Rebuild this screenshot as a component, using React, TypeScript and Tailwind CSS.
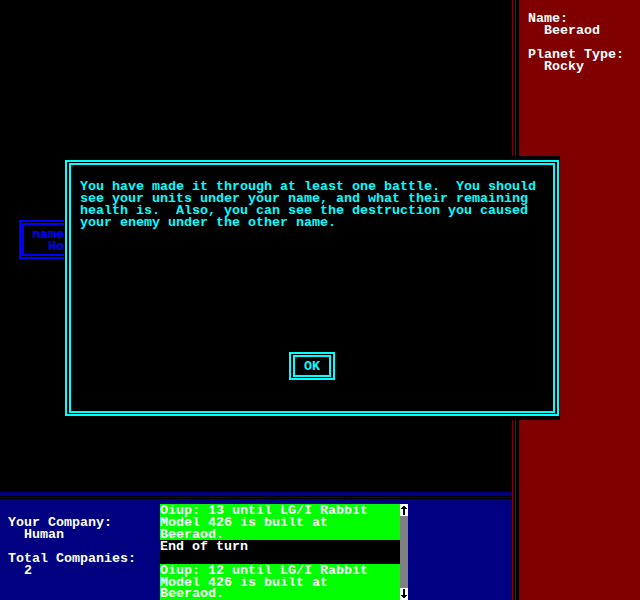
import React from "react";

function L({ children }: { children?: React.ReactNode }) {
  return <div className="h-[12px] leading-[14px]">{children}</div>;
}

export default function App() {
  return (
    <div className="relative flex w-[640px] h-[600px] bg-black overflow-hidden font-['Liberation_Mono','DejaVu_Sans_Mono',monospace] font-bold text-[13.333px] leading-[12px] whitespace-pre">
      <div className="flex flex-col w-[512px]">
        <div className="h-[492px] bg-black pt-[220px] pl-[19px]">
          <div className="w-[130px] border-2 border-[#0000ff] px-[1px] py-[1px]">
            <div className="border-2 border-[#0000ff] pt-[3px] pb-[2px] pl-[8px] text-[#0000ff]">
              <L>name:</L>
              <L>  Home</L>
            </div>
          </div>
        </div>
        <div className="h-[108px] bg-[#000080] flex flex-col">
          <div className="h-[4px]" />
          <div className="h-[1px] bg-black" />
          <div className="h-[1px]" />
          <div className="h-[1px] bg-black" />
          <div className="flex mt-[5px]">
            <div className="w-[160px] pt-[12px] pl-[8px] text-white">
              <L>Your Company:</L>
              <L>  Human</L>
              <L> </L>
              <L>Total Companies:</L>
              <L>  2</L>
            </div>
            <div className="w-[240px] text-white">
              <div className="bg-[#00ff00]">
                <L>Oiup: 13 until LG/I Rabbit</L>
                <L>Model 426 is built at</L>
                <L>Beeraod.</L>
              </div>
              <div className="bg-black">
                <L>End of turn</L>
                <L> </L>
              </div>
              <div className="bg-[#00ff00]">
                <L>Oiup: 12 until LG/I Rabbit</L>
                <L>Model 426 is built at</L>
                <div className="h-[12px] leading-[12px]">Beeraod.</div>
              </div>
            </div>
            <div className="w-[8px] flex flex-col">
              <div className="h-[12px] bg-white flex items-center justify-center">
                <svg width="8" height="12" viewBox="0 0 8 12">
                  <path d="M3 2h2v9H3zM2 3h4v1H2zM1 4h6v1H1z" fill="#000" />
                </svg>
              </div>
              <div className="h-[72px] bg-[#808080]" />
              <div className="h-[12px] bg-white flex items-center justify-center">
                <svg width="8" height="12" viewBox="0 0 8 12">
                  <path d="M3 1h2v9H3zM2 8h4v1H2zM1 7h6v1H1z" fill="#000" />
                </svg>
              </div>
            </div>
          </div>
        </div>
      </div>
      <div className="flex w-[128px] h-[600px] bg-[#800000]">
        <div className="w-[1px]" />
        <div className="w-[2px] bg-black" />
        <div className="w-[1px]" />
        <div className="w-[3px] bg-black" />
        <div className="flex-1 pl-[9px] pt-[12px] text-white">
          <L>Name:</L>
          <L>  Beeraod</L>
          <L> </L>
          <L>Planet Type:</L>
          <L>  Rocky</L>
        </div>
      </div>
      <div className="absolute left-[64px] top-[156px] w-[496px] h-[264px] bg-black px-[1px] pt-[4px] pb-[4px]">
        <div className="h-full border-2 border-[#00ffff] px-[2px] py-[1px]">
          <div className="h-full border-2 border-[#00ffff] pt-[15px] pl-[9px] text-[#00ffff] flex flex-col">
            <L>{"You have made it through at least one battle.  You should"}</L>
            <L>{"see your units under your name, and what their remaining"}</L>
            <L>{"health is.  Also, you can see the destruction you caused"}</L>
            <L>{"your enemy under the other name."}</L>
            <div className="flex justify-center mt-[124px] pr-[9px]">
              <div className="w-[46px] h-[28px] border-2 border-[#00ffff] px-[2px] py-[1px]">
                <div className="h-full border-2 border-[#00ffff] flex items-center justify-center pt-[1px]">OK</div>
              </div>
            </div>
          </div>
        </div>
      </div>
    </div>
  );
}
